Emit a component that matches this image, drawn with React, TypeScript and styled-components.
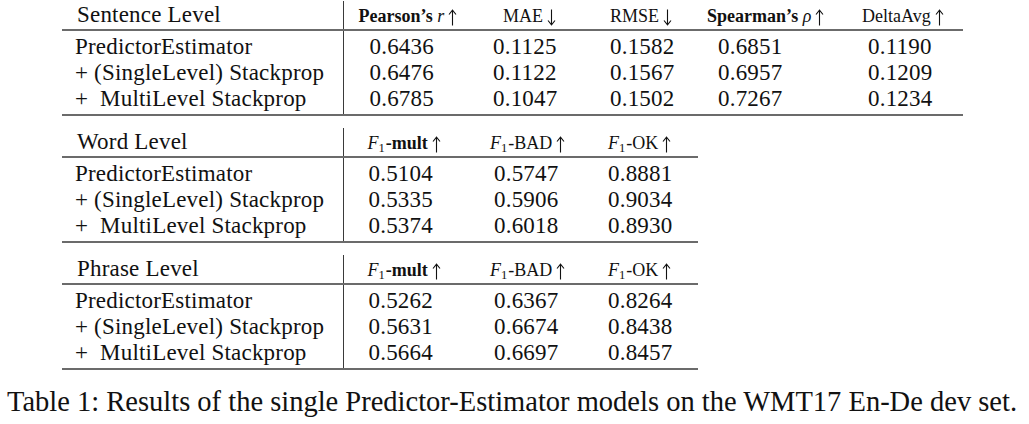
import React from 'react';
import styled, { createGlobalStyle } from 'styled-components';

const GlobalStyle = createGlobalStyle`
  html, body {
    margin: 0;
    padding: 0;
    background: #ffffff;
  }
  body {
    font-family: 'Liberation Serif', 'Times New Roman', serif;
    color: #111111;
  }
`;

const serif = `'Liberation Serif', 'Times New Roman', serif`;

const Page = styled.div`
  width: 1029px;
  height: 424px;
  padding-top: 1px;
  box-sizing: border-box;
  overflow: hidden;
`;

const Table = styled.table<{ $width: number }>`
  margin-left: 62px;
  width: ${(p) => p.$width}px;
  border-collapse: collapse;
  table-layout: fixed;
  font-family: ${serif};
  color: #111111;
  & + & {
    margin-top: 12px;
  }
`;

const HeadCell = styled.th<{ $pad: number }>`
  padding: 2px 0 0 ${(p) => p.$pad}px;
  height: 26px;
  line-height: 26px;
  font-family: ${serif};
  font-size: 18px;
  font-weight: normal;
  text-align: left;
  white-space: nowrap;
  vertical-align: top;
  border-bottom: 2px solid #6b6b6b;
`;

const LabelHead = styled(HeadCell)`
  padding-top: 0;
  height: 28px;
  line-height: 28px;
  font-size: 23px;
  letter-spacing: 0.2px;
  border-right: 1px solid #3a3a3a;
`;

const BodyRow = styled.tr`
  &:first-child td {
    padding-top: 3px;
  }
  &:last-child td {
    padding-bottom: 2px;
    border-bottom: 2px solid #6b6b6b;
  }
`;

const LabelCell = styled.td`
  padding: 0 0 0 13px;
  line-height: 26px;
  font-family: ${serif};
  font-size: 23px;
  letter-spacing: 0.2px;
  white-space: nowrap;
  border-right: 1px solid #3a3a3a;
`;

const ValueCell = styled.td<{ $pad: number }>`
  padding: 0 0 0 ${(p) => p.$pad}px;
  line-height: 26px;
  font-family: ${serif};
  font-size: 23px;
  letter-spacing: 0.2px;
  white-space: nowrap;
`;

const ArrowSvg = styled.svg`
  width: 9px;
  height: 17px;
  margin-left: 4px;
  vertical-align: -4px;
`;

const Sub = styled.sub`
  font-size: 0.7em;
  font-style: normal;
  vertical-align: -0.25em;
  line-height: 0;
  margin-right: 1px;
`;

const Caption = styled.p`
  margin: 15px 0 0;
  padding-left: 7px;
  font-family: ${serif};
  font-size: 28.5px;
  line-height: 34px;
  white-space: nowrap;
`;

const Arrow = ({ dir }: { dir: 'up' | 'down' }) => (
  <ArrowSvg viewBox="0 0 9 17" aria-hidden>
    {dir === 'up' ? (
      <path d="M4.5 16.5V1.5M1 5.5 4.5 1.2 8 5.5" fill="none" stroke="#111" strokeWidth="1.1" />
    ) : (
      <path d="M4.5 0.5V15.5M1 11.5 4.5 15.8 8 11.5" fill="none" stroke="#111" strokeWidth="1.1" />
    )}
  </ArrowSvg>
);

type Column = { head: React.ReactNode; width: number; headPad: number; valuePad: number };
type Section = { title: string; columns: Column[]; rows: string[][] };

const f1 = (suffix: React.ReactNode) => (
  <>
    <i>F</i>
    <Sub>1</Sub>
    {suffix}
    <Arrow dir="up" />
  </>
);

const labels = ['PredictorEstimator', '+ (SingleLevel) Stackprop', '+\u00a0\u00a0MultiLevel Stackprop'];

const sections: Section[] = [
  {
    title: 'Sentence Level',
    columns: [
      {
        head: (
          <>
            <b>Pearson’s</b> <i>r</i>
            <Arrow dir="up" />
          </>
        ),
        width: 137,
        headPad: 15,
        valuePad: 26,
      },
      { head: <>MAE<Arrow dir="down" /></>, width: 115, headPad: 23, valuePad: 13 },
      { head: <>RMSE<Arrow dir="down" /></>, width: 100, headPad: 15, valuePad: 15 },
      {
        head: (
          <>
            <b>Spearman’s</b> <i>ρ</i>
            <Arrow dir="up" />
          </>
        ),
        width: 155,
        headPad: 12,
        valuePad: 23,
      },
      { head: <>DeltaAvg<Arrow dir="up" /></>, width: 113, headPad: 12, valuePad: 18 },
    ],
    rows: [
      ['0.6436', '0.1125', '0.1582', '0.6851', '0.1190'],
      ['0.6476', '0.1122', '0.1567', '0.6957', '0.1209'],
      ['0.6785', '0.1047', '0.1502', '0.7267', '0.1234'],
    ],
  },
  {
    title: 'Word Level',
    columns: [
      { head: f1(<b>-mult</b>), width: 137, headPad: 24, valuePad: 25 },
      { head: f1('-BAD'), width: 115, headPad: 10, valuePad: 14 },
      { head: f1('-OK'), width: 103, headPad: 13, valuePad: 13 },
    ],
    rows: [
      ['0.5104', '0.5747', '0.8881'],
      ['0.5335', '0.5906', '0.9034'],
      ['0.5374', '0.6018', '0.8930'],
    ],
  },
  {
    title: 'Phrase Level',
    columns: [
      { head: f1(<b>-mult</b>), width: 137, headPad: 24, valuePad: 25 },
      { head: f1('-BAD'), width: 115, headPad: 10, valuePad: 14 },
      { head: f1('-OK'), width: 103, headPad: 13, valuePad: 13 },
    ],
    rows: [
      ['0.5262', '0.6367', '0.8264'],
      ['0.5631', '0.6674', '0.8438'],
      ['0.5664', '0.6697', '0.8457'],
    ],
  },
];

const LABEL_WIDTH = 281;

const ResultTable = ({ section }: { section: Section }) => {
  const total = LABEL_WIDTH + section.columns.reduce((s, c) => s + c.width, 0);
  return (
    <Table $width={total}>
      <colgroup>
        <col style={{ width: LABEL_WIDTH }} />
        {section.columns.map((c, i) => (
          <col key={i} style={{ width: c.width }} />
        ))}
      </colgroup>
      <thead>
        <tr>
          <LabelHead $pad={15}>{section.title}</LabelHead>
          {section.columns.map((c, i) => (
            <HeadCell key={i} $pad={c.headPad}>
              {c.head}
            </HeadCell>
          ))}
        </tr>
      </thead>
      <tbody>
        {section.rows.map((row, r) => (
          <BodyRow key={r}>
            <LabelCell>{labels[r]}</LabelCell>
            {row.map((v, i) => (
              <ValueCell key={i} $pad={section.columns[i].valuePad}>
                {v}
              </ValueCell>
            ))}
          </BodyRow>
        ))}
      </tbody>
    </Table>
  );
};

const App = () => (
  <>
    <GlobalStyle />
    <Page>
      {sections.map((s) => (
        <ResultTable key={s.title} section={s} />
      ))}
      <Caption>Table 1: Results of the single Predictor-Estimator models on the WMT17 En-De dev set.</Caption>
    </Page>
  </>
);

export default App;
